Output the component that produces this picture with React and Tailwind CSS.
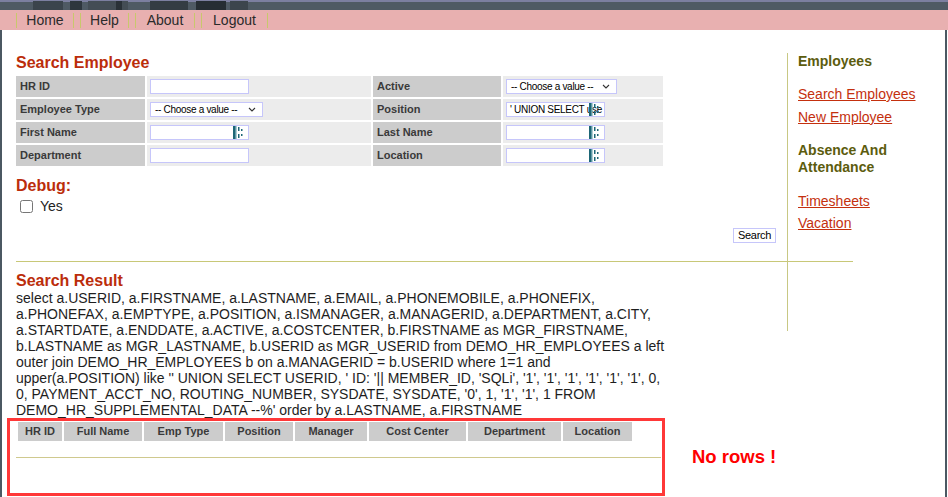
import React from 'react'

const FONT = "font-['Liberation_Sans',Arial,sans-serif]"

const AutoIcon = () => (
  <svg width="11" height="14" viewBox="0 0 11 14" className="absolute right-[4px] top-0">
    <rect x="0" y="0" width="2" height="14" fill="#1d6676" />
    <rect x="2" y="0" width="1.5" height="14" fill="#5f9aa6" />
    <rect x="5" y="1" width="1.5" height="4" fill="#1d6676" />
    <rect x="5" y="8" width="1.5" height="4" fill="#1d6676" />
    <rect x="8" y="3" width="1.5" height="2" fill="#1d6676" />
    <rect x="8" y="8" width="1.5" height="2" fill="#1d6676" />
  </svg>
)

const TextBox = ({ value = '', icon = false }) => (
  <div className="relative w-[99px] h-[15px] bg-white border border-[#c6c6fa] text-[10px] leading-[13px] tracking-[-0.3px] text-black pl-[3px] overflow-hidden whitespace-nowrap">
    {value}
    {icon && <AutoIcon />}
  </div>
)

const Select = ({ w }) => (
  <div className={`${w} h-[15px] bg-white border border-[#c6c6fa] flex items-center justify-between pl-[4px] pr-[6px] text-[10px] tracking-[-0.3px] text-black`}>
    <span>-- Choose a value --</span>
    <svg width="8" height="5" viewBox="0 0 8 5"><path d="M1 1l3 3 3-3" stroke="#333" strokeWidth="1.1" fill="none" /></svg>
  </div>
)

const Label = ({ children }) => (
  <div className="bg-[#cccccc] h-[21px] flex items-center pl-[4px] text-[11px] font-bold text-[#3a3a3a]">{children}</div>
)

const Value = ({ children }) => (
  <div className="bg-[#ececec] h-[21px] flex items-center pl-[3px]">{children}</div>
)

const sqlLines = [
  'select a.USERID, a.FIRSTNAME, a.LASTNAME, a.EMAIL, a.PHONEMOBILE, a.PHONEFIX,',
  'a.PHONEFAX, a.EMPTYPE, a.POSITION, a.ISMANAGER, a.MANAGERID, a.DEPARTMENT, a.CITY,',
  'a.STARTDATE, a.ENDDATE, a.ACTIVE, a.COSTCENTER, b.FIRSTNAME as MGR_FIRSTNAME,',
  'b.LASTNAME as MGR_LASTNAME, b.USERID as MGR_USERID from DEMO_HR_EMPLOYEES a left',
  'outer join DEMO_HR_EMPLOYEES b on a.MANAGERID = b.USERID where 1=1 and',
  "upper(a.POSITION) like '' UNION SELECT USERID, ' ID: '|| MEMBER_ID, 'SQLi', '1', '1', '1', '1', '1', '1', 0,",
  "0, PAYMENT_ACCT_NO, ROUTING_NUMBER, SYSDATE, SYSDATE, '0', 1, '1', '1', 1 FROM",
  "DEMO_HR_SUPPLEMENTAL_DATA --%' order by a.LASTNAME, a.FIRSTNAME",
]

const columns = [
  ['HR ID', 'w-[44px]'],
  ['Full Name', 'w-[78px]'],
  ['Emp Type', 'w-[79px]'],
  ['Position', 'w-[68px]'],
  ['Manager', 'w-[72px]'],
  ['Cost Center', 'w-[97px]'],
  ['Department', 'w-[93px]'],
  ['Location', 'w-[69px]'],
]

const navItems = [
  ['Home', 'w-[58px]'],
  ['Help', 'w-[49px]'],
  ['About', 'w-[60px]'],
  ['Logout', 'w-[67px]'],
]

const Banner = () => (
  <svg width="948" height="10" viewBox="0 0 948 10" className="block">
    <rect width="948" height="10" fill="#4f5a64" />
    <rect width="948" height="2" fill="#7c7fa0" />
    <rect x="33" y="1" width="30" height="9" fill="#3b444c" />
    <rect x="70" y="1" width="12" height="9" fill="#2e363d" />
    <rect x="88" y="1" width="40" height="9" fill="#444d55" />
    <rect x="116" y="1" width="6" height="9" fill="#2a3137" />
    <rect x="150" y="1" width="38" height="9" fill="#343c43" />
    <rect x="196" y="1" width="30" height="9" fill="#262d33" />
    <rect x="230" y="1" width="18" height="9" fill="#3c454d" />
  </svg>
)

export default function App() {
  return (
    <div className={`w-[948px] bg-white ${FONT} text-[#222]`}>
      <Banner />
      <nav className="h-[20px] bg-[#e8b0b0] flex items-center pl-[16px] gap-[6px]">
        {navItems.map(([t, w]) => (
          <div key={t} className={`${w} h-[15px] border-x border-[#c8c86c] flex items-center justify-center text-[14px] text-[#2a2a2a]`}>
            {t}
          </div>
        ))}
      </nav>

      <div className="relative w-[947px] h-[467px] border-x-2 border-[#4b5862] flex pl-[14px]">
        {/* main column */}
        <div className="w-[771px] shrink-0 pt-[24px]">
          <h2 className="text-[16px] leading-[18px] font-bold text-[#bb2d0b]">Search Employee</h2>

          <div className="mt-[4px] grid grid-cols-[129px_224px_128px_160px] gap-[2px]">
            <Label>HR ID</Label>
            <Value><TextBox /></Value>
            <Label>Active</Label>
            <Value><Select w="w-[111px]" /></Value>

            <Label>Employee Type</Label>
            <Value><Select w="w-[113px]" /></Value>
            <Label>Position</Label>
            <Value><TextBox value="' UNION SELECT use" icon /></Value>

            <Label>First Name</Label>
            <Value><TextBox icon /></Value>
            <Label>Last Name</Label>
            <Value><TextBox icon /></Value>

            <Label>Department</Label>
            <Value><TextBox /></Value>
            <Label>Location</Label>
            <Value><TextBox icon /></Value>
          </div>

          <h2 className="mt-[11px] text-[16px] leading-[18px] font-bold text-[#bb2d0b]">Debug:</h2>
          <label className="mt-[3px] h-[17px] flex items-center pl-[4px] gap-[7px] text-[14px]">
            <input type="checkbox" className="w-[13px] h-[13px] m-0" />
            Yes
          </label>

          <div className="mt-[13px] flex justify-end pr-[11px]">
            <button className="h-[15px] w-[43px] border border-[#c6c6fa] bg-white text-[11px] leading-[13px] tracking-[-0.3px] text-black">
              Search
            </button>
          </div>

          <div className="mt-[18px] w-[837px] h-px bg-[#c8c878]" />

          <h2 className="mt-[10px] text-[16px] leading-[18px] font-bold text-[#bb2d0b]">Search Result</h2>
          <div className="text-[14px] leading-[16px] text-[#1e1e1e] whitespace-nowrap">
            {sqlLines.map((l, i) => (
              <div key={i}>{l}</div>
            ))}
          </div>

          <div className="mt-[4px] w-[645px]">
            <div className="flex gap-[2px] pl-[2px]">
              {columns.map(([t, w]) => (
                <div key={t} className={`${w} h-[19px] bg-[#cccccc] flex items-center justify-center text-[11px] font-bold text-[#3a3a3a]`}>
                  {t}
                </div>
              ))}
            </div>
            <div className="mt-[16px] h-px bg-[#cfc98e]" />
          </div>
        </div>

        {/* sidebar */}
        <aside className="mt-[23px] h-[278px] flex-1 border-l border-[#c8c884] pl-[10px] text-[14px] leading-[17px]">
          <div className="font-bold text-[#5c5c0e]">Employees</div>
          <a className="block mt-[16px] underline text-[#c4300e]">Search Employees</a>
          <a className="block mt-[6px] underline text-[#c4300e]">New Employee</a>
          <div className="mt-[16px] font-bold text-[#5c5c0e]">Absence And<br />Attendance</div>
          <a className="block mt-[17px] underline text-[#c4300e]">Timesheets</a>
          <a className="block mt-[5px] underline text-[#c4300e]">Vacation</a>
        </aside>

        {/* annotation overlay */}
        <div className="absolute left-[5px] top-[388px] w-[658px] h-[78px] border-[3px] border-[#ff3838]" />
        <div className="absolute left-[690px] top-[416px] text-[18.5px] leading-[22px] font-bold text-[#ff0000]">No rows !</div>
      </div>
    </div>
  )
}
